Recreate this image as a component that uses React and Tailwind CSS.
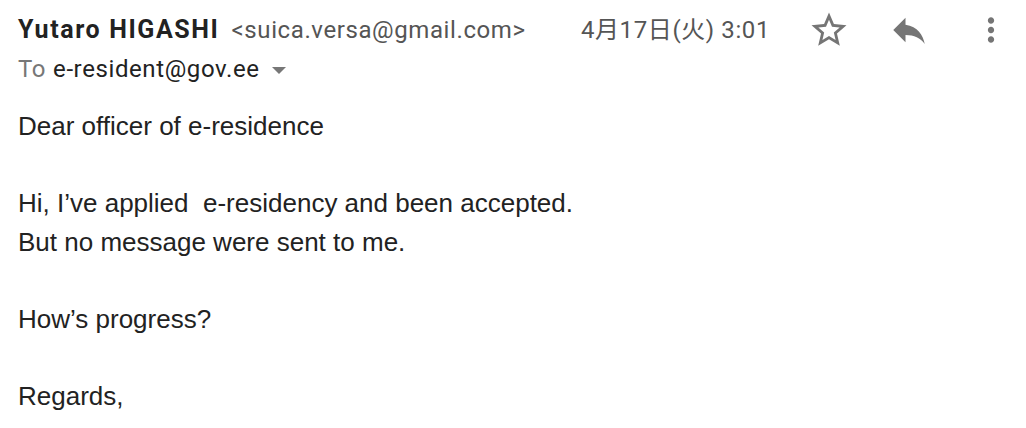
import React from 'react';

const StarIcon = () => (
  <svg width="42" height="42" viewBox="0 0 24 24" fill="#757575">
    <path d="M22 9.24l-7.19-.62L12 2 9.19 8.63 2 9.24l5.46 4.73L5.82 21 12 17.27 18.18 21l-1.63-7.03L22 9.24zM12 15.4l-3.76 2.27 1-4.28-3.32-2.88 4.38-.38L12 6.1l1.71 4.04 4.38.38-3.32 2.88 1 4.28L12 15.4z" />
  </svg>
);

const ReplyIcon = () => (
  <svg width="42" height="42" viewBox="0 0 24 24" fill="#757575">
    <path d="M10 9V5l-7 7 7 7v-4.1c5 0 8.5 1.6 11 5.1-1-5-4-10-11-11z" />
  </svg>
);

const MoreIcon = () => (
  <svg width="38" height="38" viewBox="0 0 24 24" fill="#757575">
    <path d="M12 8c1.1 0 2-.9 2-2s-.9-2-2-2-2 .9-2 2 .9 2 2 2zm0 2c-1.1 0-2 .9-2 2s.9 2 2 2 2-.9 2-2-.9-2-2-2zm0 6c-1.1 0-2 .9-2 2s.9 2 2 2 2-.9 2-2-.9-2-2-2z" />
  </svg>
);

export default function App() {
  const body = [
    'Dear officer of e-residence',
    '',
    'Hi, I\u2019ve applied \u00a0e-residency and been accepted.',
    'But no message were sent to me.',
    '',
    'How\u2019s progress?',
    '',
    'Regards,',
  ];

  return (
    <div className="w-[1026px] h-[428px] bg-white overflow-hidden">
      <div className="pl-[18px] pr-[16px] pt-[10px]" style={{ fontFamily: 'Roboto, sans-serif' }}>
        <div className="flex items-center h-[40px]">
          <span className="text-[25px] font-bold text-[#222] tracking-[1.6px]">Yutaro HIGASHI</span>
          <span className="ml-[12px] text-[24px] text-[#555] tracking-[0.6px]">&lt;suica.versa@gmail.com&gt;</span>
          <span
            className="ml-auto text-[24px] text-[#555] tracking-[0.6px]"
            style={{ fontFamily: 'Roboto, "Noto Sans CJK JP", sans-serif' }}
          >
            4月17日(火) 3:01
          </span>
          <div className="ml-[38px] flex items-center">
            <StarIcon />
          </div>
          <div className="ml-[38px] flex items-center">
            <ReplyIcon />
          </div>
          <div className="ml-[42px] flex items-center">
            <MoreIcon />
          </div>
        </div>
        <div className="flex items-center h-[38px] text-[24px] tracking-[0.6px]">
          <span className="text-[#777]">To</span>
          <span className="ml-[7px] text-[#222]">e-resident@gov.ee</span>
          <span className="ml-[12px] mt-[3px] w-0 h-0 border-l-[7px] border-r-[7px] border-t-[7px] border-l-transparent border-r-transparent border-t-[#777]" />
        </div>
      </div>
      <div
        className="pl-[18px] pt-[19px] text-[26px] leading-[38.5px] text-[#222]"
        style={{ fontFamily: '"Liberation Sans", Arial, sans-serif' }}
      >
        {body.map((line, i) => (
          <div key={i} className="h-[38.5px] whitespace-pre">{line}</div>
        ))}
      </div>
    </div>
  );
}
